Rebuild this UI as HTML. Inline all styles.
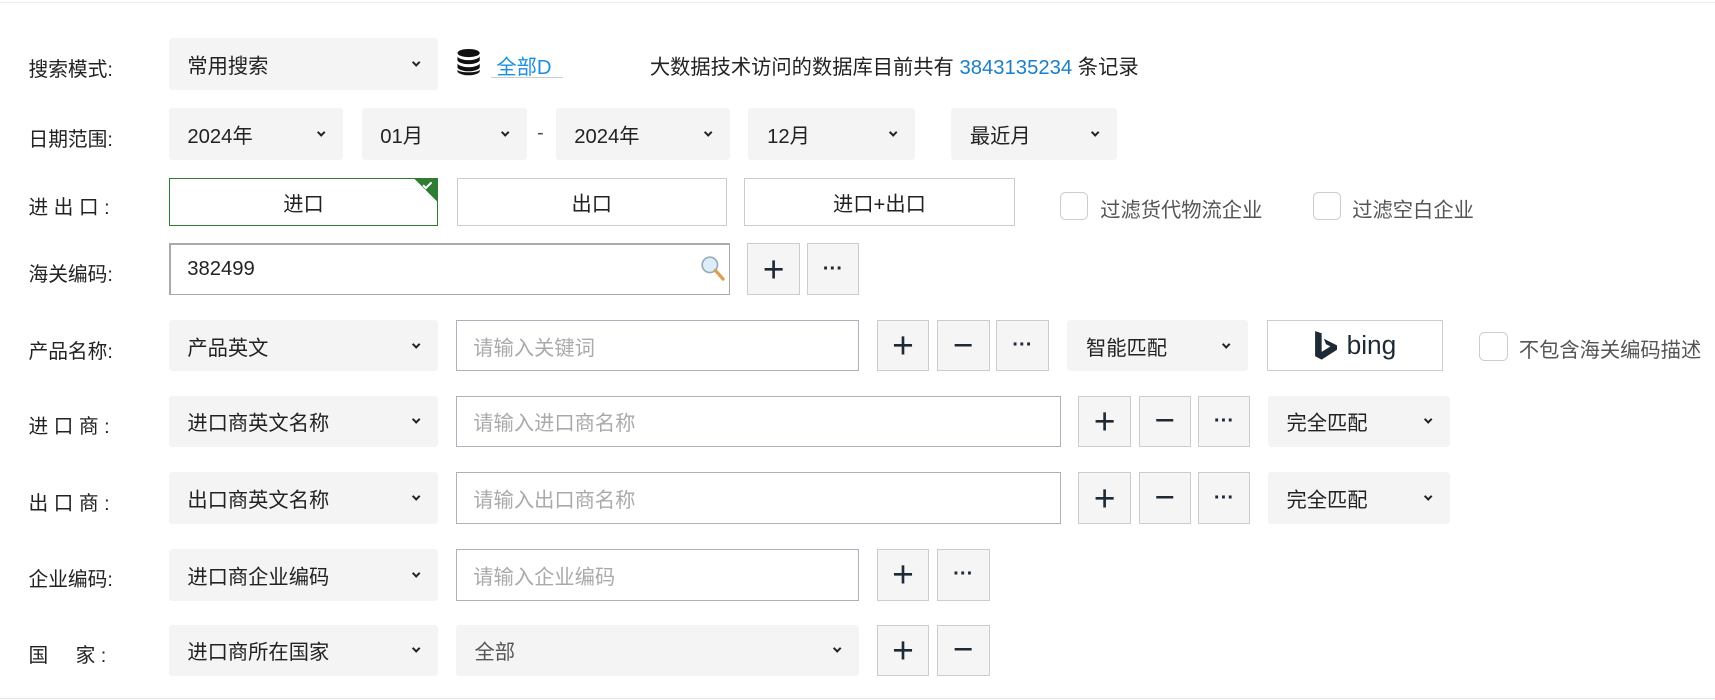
<!DOCTYPE html>
<html><head><meta charset="utf-8"><style>
html,body{margin:0;padding:0;background:#fff;overflow:hidden}
body{width:1715px;height:700px}
#w{position:absolute;left:0;top:0;width:1565px;height:639px;zoom:1.09585;font-family:"Liberation Sans","Noto Sans CJK SC",sans-serif;font-size:18.5px;color:#222}
.a{position:absolute;box-sizing:border-box}
.lbl{position:absolute;left:26px;font-size:18px;color:#222}
.sel{position:absolute;box-sizing:border-box;background:#f4f4f4;border-radius:3px;padding-left:17px;display:flex;align-items:center;height:47px}
.sel::after{content:"";position:absolute;right:17px;top:50%;width:4px;height:4px;border-right:2px solid #222;border-bottom:2px solid #222;transform:translateY(-4px) rotate(45deg)}
.inp{position:absolute;box-sizing:border-box;border:1px solid #b0b0bc;height:47px;padding-left:15px;display:flex;align-items:center;color:#aaa;background:#fff}
.btn{position:absolute;box-sizing:border-box;border:1px solid #ccc;background:#f5f5f5;width:48px;height:47px;display:flex;align-items:center;justify-content:center;color:#1e2a36}
.tg{position:absolute;box-sizing:border-box;border:1px solid #ccc;height:44px;display:flex;align-items:center;justify-content:center;top:162px;background:#fff}
.cb{position:absolute;box-sizing:border-box;width:26px;height:26px;border:1px solid #ccc;border-radius:5px;background:#fff}
.ct{position:absolute;color:#555}
</style></head><body><div id="w">
<div class="a" style="left:0;top:2px;width:1565px;height:1px;background:#eee"></div>
<div class="a" style="left:0;top:637px;width:1565px;height:1px;background:#e4e4e4"></div>

<div class="lbl" style="top:48px">搜索模式:</div>
<div class="sel" style="left:154px;top:35px;width:246px">常用搜索</div>
<svg class="a" style="left:416px;top:45px" width="23" height="24" viewBox="0 0 23 26"><ellipse cx="11.5" cy="4" rx="11" ry="4" fill="#111"/><path d="M0.5 7v4c0 2 5 4 11 4s11-2 11-4V7c0 2-5 4-11 4S0.5 9 .5 7z" fill="#111"/><path d="M0.5 14v4c0 2 5 4 11 4s11-2 11-4v-4c0 2-5 4-11 4S.5 16 .5 14z" fill="#111"/><path d="M0.5 20v2c0 2 5 4 11 4s11-2 11-4v-2c0 2-5 3-11 3S.5 22 .5 20z" fill="#111"/></svg>
<div class="a" style="left:448px;top:46px;width:66px;height:25px;border-bottom:1px solid #ccc;color:#1a8fe0;padding-left:5px">全部D</div>
<div class="a" style="left:593px;top:46px">大数据技术访问的数据库目前共有 <span style="color:#1a7fc8">3843135234</span> 条记录</div>

<div class="lbl" style="top:112px">日期范围:</div>
<div class="sel" style="left:154px;top:99px;width:159px">2024年</div>
<div class="sel" style="left:330px;top:99px;width:151px">01月</div>
<div class="a" style="left:490px;top:111px;color:#555">-</div>
<div class="sel" style="left:507px;top:99px;width:159px">2024年</div>
<div class="sel" style="left:683px;top:99px;width:152px">12月</div>
<div class="sel" style="left:868px;top:99px;width:151px">最近月</div>

<div class="lbl" style="top:174px">进 出 口 :</div>
<div class="tg" style="left:154px;width:246px;border-color:#2e7d32;overflow:hidden">进口<div class="a" style="right:-15px;top:-15px;width:30px;height:30px;background:#2e7d32;transform:rotate(45deg)"></div><div class="a" style="right:5px;top:3px;width:8px;height:5px;border-left:2px solid #fff;border-bottom:2px solid #fff;transform:rotate(-45deg)"></div></div>
<div class="tg" style="left:417px;width:246px">出口</div>
<div class="tg" style="left:679px;width:247px">进口+出口</div>
<div class="cb" style="left:967px;top:175px"></div><div class="ct" style="left:1004px;top:176px">过滤货代物流企业</div>
<div class="cb" style="left:1198px;top:175px"></div><div class="ct" style="left:1234px;top:176px">过滤空白企业</div>

<div class="lbl" style="top:235px">海关编码:</div>
<div class="inp" style="left:154px;top:222px;width:512px;color:#222;border-color:#aaa;border-top-width:2px;border-left-width:2px">382499</div>
<svg class="a" style="left:639px;top:233px" width="24" height="26" viewBox="0 0 24 26"><circle cx="9" cy="9" r="7" fill="#dbeefa" stroke="#9ab" stroke-width="1.5"/><path d="M14 14l7 8" stroke="#d8a050" stroke-width="3" stroke-linecap="round"/></svg>
<div class="btn" style="left:682px;top:222px;font-size:34px">+</div>
<div class="btn" style="left:736px;top:222px;font-weight:bold">···</div>

<div class="lbl" style="top:306px">产品名称:</div>
<div class="sel" style="left:154px;top:292px;width:246px">产品英文</div>
<div class="inp" style="left:416px;top:292px;width:368px">请输入关键词</div>
<div class="btn" style="left:800px;top:292px;font-size:34px">+</div>
<div class="btn" style="left:855px;top:292px;font-size:32px">−</div>
<div class="btn" style="left:909px;top:292px;font-weight:bold">···</div>
<div class="sel" style="left:974px;top:292px;width:165px">智能匹配</div>
<div class="a" style="left:1156px;top:292px;width:161px;height:47px;border:1px solid #ccc;display:flex;align-items:center;justify-content:center;color:#1e2a36;font-size:24px"><svg width="22" height="28" viewBox="0 0 22 28" style="margin-right:8px"><path d="M1 1l6 2v17l8-5-4-2-2-5 12 6v4L7 27 1 24z" fill="#1e2a36"/></svg>bing</div>
<div class="cb" style="left:1350px;top:303px"></div><div class="ct" style="left:1386px;top:304px">不包含海关编码描述</div>

<div class="lbl" style="top:374px">进 口 商 :</div>
<div class="sel" style="left:154px;top:361px;width:246px">进口商英文名称</div>
<div class="inp" style="left:416px;top:361px;width:552px">请输入进口商名称</div>
<div class="btn" style="left:984px;top:361px;font-size:34px">+</div>
<div class="btn" style="left:1039px;top:361px;font-size:32px">−</div>
<div class="btn" style="left:1093px;top:361px;font-weight:bold">···</div>
<div class="sel" style="left:1157px;top:361px;width:166px">完全匹配</div>

<div class="lbl" style="top:444px">出 口 商 :</div>
<div class="sel" style="left:154px;top:431px;width:246px">出口商英文名称</div>
<div class="inp" style="left:416px;top:431px;width:552px">请输入出口商名称</div>
<div class="btn" style="left:984px;top:431px;font-size:34px">+</div>
<div class="btn" style="left:1039px;top:431px;font-size:32px">−</div>
<div class="btn" style="left:1093px;top:431px;font-weight:bold">···</div>
<div class="sel" style="left:1157px;top:431px;width:166px">完全匹配</div>

<div class="lbl" style="top:514px">企业编码:</div>
<div class="sel" style="left:154px;top:501px;width:246px">进口商企业编码</div>
<div class="inp" style="left:416px;top:501px;width:368px">请输入企业编码</div>
<div class="btn" style="left:800px;top:501px;font-size:34px">+</div>
<div class="btn" style="left:855px;top:501px;font-weight:bold">···</div>

<div class="lbl" style="top:583px">国&nbsp;&nbsp;&nbsp;&nbsp;&nbsp;家 :</div>
<div class="sel" style="left:154px;top:570px;width:246px">进口商所在国家</div>
<div class="sel" style="left:416px;top:570px;width:368px;color:#555">全部</div>
<div class="btn" style="left:800px;top:570px;font-size:34px">+</div>
<div class="btn" style="left:855px;top:570px;font-size:32px">−</div>
</div></body></html>
